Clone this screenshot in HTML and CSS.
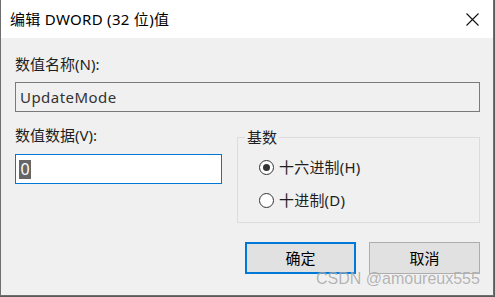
FILE: index.html
```html
<!DOCTYPE html>
<html lang="zh-CN">
<head>
<meta charset="utf-8">
<title>编辑 DWORD (32 位)值</title>
<link rel="stylesheet" href="styles.css">
</head>
<body>
<div class="window">
  <div class="titlebar">
    <span class="title">编辑 DWORD (32 位)值</span>
    <svg class="close" width="13" height="13" viewBox="0 0 13 13"><path d="M0.5 0.5 L12.5 12.5 M12.5 0.5 L0.5 12.5" stroke="#111" stroke-width="1.1" fill="none"/></svg>
  </div>
  <div class="content">
    <div class="label first">数值名称(N):</div>
    <div class="field readonly">UpdateMode</div>
    <div class="row">
      <div class="col-left">
        <div class="label">数值数据(V):</div>
        <div class="field active"><span class="sel">0</span></div>
      </div>
      <fieldset class="group">
        <legend>基数</legend>
        <div class="radio"><span class="dot checked"></span><span>十六进制(H)</span></div>
        <div class="radio"><span class="dot"></span><span>十进制(D)</span></div>
      </fieldset>
    </div>
    <div class="buttons">
      <div class="btn default">确定</div>
      <div class="btn">取消</div>
    </div>
  </div>
  <div class="watermark">CSDN @amoureux555</div>
</div>
</body>
</html>
```
FILE: styles.css
```css
html, body {
  margin: 0;
  padding: 0;
  background: #5a5a5a;
}
body {
  width: 495px;
  height: 297px;
  overflow: hidden;
  font-family: "Noto Sans", "Noto Sans CJK SC", sans-serif;
  font-size: 15px;
  color: #1e1e1e;
}
.window {
  position: relative;
  width: 492px;
  height: 295px;
  background: #f0f0f0;
  border-left: 1px solid #6f6f6f;
  border-right: 1px solid #6f6f6f;
  border-bottom: 1px solid #6f6f6f;
}
.titlebar {
  height: 38px;
  background: #fff;
  display: flex;
  align-items: center;
  justify-content: space-between;
  padding: 0 14px 0 9px;
}
.title {
  font-size: 15px;
  line-height: 20px;
  color: #000;
  margin-top: -1px;
  letter-spacing: 0.3px;
}
.close {
  display: block;
}
.content {
  padding: 0 13px 0 14px;
}
.label {
  line-height: 20px;
  height: 20px;
}
.label.first {
  margin-top: 16px;
}
.field {
  box-sizing: border-box;
  height: 30px;
  border: 1px solid #7a7a7a;
  padding: 0 0 0 4px;
  line-height: 28px;
  font-size: 15px;
}
.readonly {
  margin-top: 8px;
  background: #f0f0f0;
  color: #333;
  width: 465px;
  letter-spacing: 0.45px;
}
.row {
  display: flex;
  margin-top: 13px;
}
.col-left {
  width: 207px;
}
.active {
  margin-top: 9px;
  width: 207px;
  background: #fff;
  border-color: #0078d7;
  padding-left: 3px;
  display: flex;
  align-items: center;
}
.sel {
  background: #666;
  color: #fff;
  line-height: 19px;
  height: 19px;
  padding: 0 1.5px;
  font-size: 16px;
}
.group {
  margin: 2px 0 0 15px;
  padding: 0 0 0 21px;
  width: 243px;
  height: 96px;
  box-sizing: border-box;
  border: 1px solid #dcdcdc;
}
.group legend {
  padding: 0 2px;
  margin-left: -14px;
  line-height: 20px;
}
.radio {
  display: flex;
  align-items: center;
  height: 20px;
  line-height: 20px;
  margin-top: 10px;
  letter-spacing: 0.2px;
}
.radio + .radio {
  margin-top: 13px;
}
.dot {
  box-sizing: border-box;
  width: 15px;
  height: 15px;
  border: 1px solid #333;
  border-radius: 50%;
  background: #fff;
  margin-right: 5px;
  display: flex;
  align-items: center;
  justify-content: center;
}
.dot.checked::after {
  content: "";
  width: 7px;
  height: 7px;
  border-radius: 50%;
  background: #333;
}
.buttons {
  display: flex;
  justify-content: flex-end;
  gap: 13px;
  margin-top: 19px;
}
.btn {
  box-sizing: border-box;
  width: 111px;
  height: 32px;
  background: #e1e1e1;
  border: 1px solid #adadad;
  text-align: center;
  line-height: 30px;
  color: #000;
}
.btn.default {
  border: 2px solid #0078d7;
  line-height: 28px;
}
.watermark {
  position: absolute;
  left: 315px;
  top: 270px;
  font-family: "Liberation Sans", Arial, sans-serif;
  font-size: 16px;
  line-height: 18px;
  color: rgba(140, 140, 140, 0.65);
  text-shadow: 0 0 1px rgba(255,255,255,0.6);
}
```
